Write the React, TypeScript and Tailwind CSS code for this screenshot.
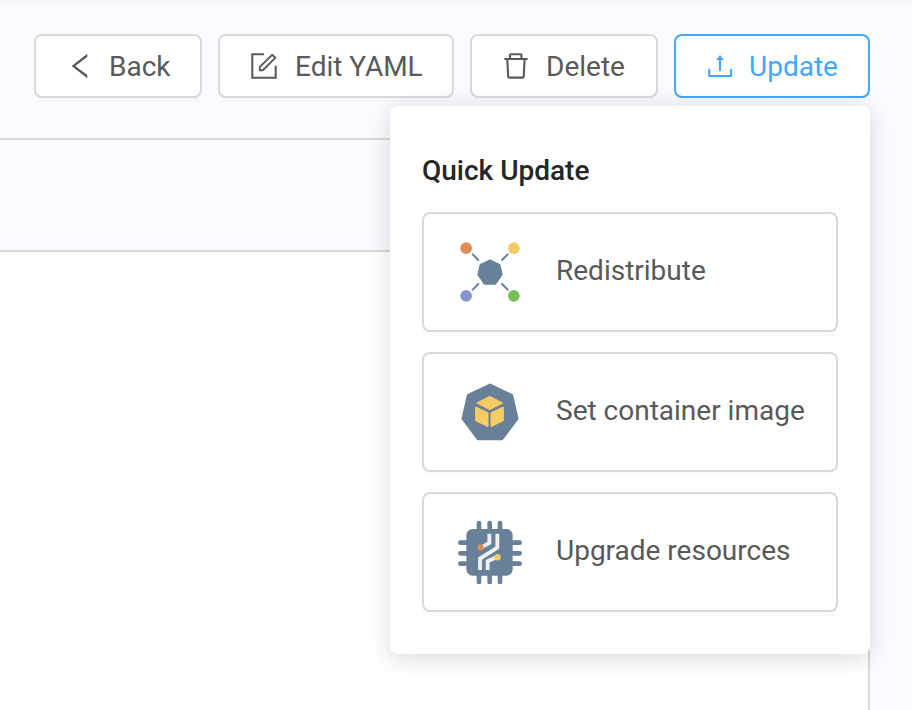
import type { ReactNode } from "react";

const BackIcon = () => (
  <svg className="size-7 shrink-0" viewBox="0 0 28 28" fill="currentColor">
    <path d="M21.3 1.8v3.1L9.2 14l12.1 9.1v3.1L5.6 14z" />
  </svg>
);

const EditIcon = () => (
  <svg className="size-7 shrink-0" viewBox="0 0 28 28" fill="none" stroke="currentColor" strokeWidth="2.1">
    <path d="M14 2.3H2.3v23.4h23.4V13.7" />
    <path d="M9.8 14.9 22.2 2.8l3.1 3L12.9 18.2H9.8z" strokeWidth="1.9" />
  </svg>
);

const TrashIcon = () => (
  <svg className="size-7 shrink-0" viewBox="0 0 28 28" fill="none" stroke="currentColor" strokeWidth="2.1" strokeLinejoin="round">
    <path d="M2.3 7h23.4M7.9 6.6V3.3q0-1 1-1h9.6q1 0 1 1v3.3" />
    <path d="m5.3 7.5.9 17.1q.1 1 1 1h13.5q.9 0 1-1l.9-17.1" />
  </svg>
);

const UploadIcon = () => (
  <svg className="size-7 shrink-0" viewBox="0 0 28 28" fill="none" stroke="currentColor" strokeWidth="2.1">
    <path d="M3.2 17v7h21.9v-7M14 7v12" />
    <path d="m14 3 4 5h-8z" fill="currentColor" stroke="none" />
  </svg>
);

const RedistributeIcon = () => (
  <svg className="size-16 shrink-0" viewBox="54 30 192 192">
    <path d="m98 73 17 17M203 73l-17 17M115 162l-17 17M186 162l17 17" stroke="#688199" strokeWidth="6" strokeLinecap="round" />
    <path d="m150 90 29 14 7 30-19 28h-34l-19-28 7-30z" fill="#688199" stroke="#688199" strokeWidth="4" strokeLinejoin="round" />
    <circle cx="78.500" cy="54.500" r="17.500" fill="#e28c53" />
    <circle cx="221.500" cy="54.500" r="17.500" fill="#f7cb63" />
    <circle cx="78.500" cy="197.500" r="17.500" fill="#8496cb" />
    <circle cx="221.500" cy="197.500" r="17.500" fill="#77bf53" />
  </svg>
);

const ContainerIcon = () => (
  <svg className="size-16 shrink-0" viewBox="54 30 192 192">
    <path d="m150 45 65 31 16 70-45 60h-72l-45-60 16-70z" fill="#688199" stroke="#688199" strokeWidth="9" strokeLinejoin="round" />
    <g fill="#f7cb63" stroke="#f7cb63" strokeWidth="3" strokeLinejoin="round">
      <path d="m149 79 39 20-39 20-39-20z" />
      <path d="m107 111 37 17v42l-37-18z" />
      <path d="m190 111-37 17v42l37-18z" />
    </g>
  </svg>
);

const ChipIcon = () => (
  <svg className="size-16 shrink-0" viewBox="54 30 192 192">
    <path
      d="M117 39v177M149 39v177M180 39v177M61 98h178M61 130h178M61 161h178"
      stroke="#688199"
      strokeWidth="14"
      strokeLinecap="round"
    />
    <rect x="79" y="57" width="139" height="140" rx="19" fill="#688199" />
    <g fill="none" stroke="#ecf0f1" strokeWidth="11.500">
      <path d="M148 71v28l-25 14M172 71v42l-52 33v34M143 180v-26l28-13" />
    </g>
    <circle cx="121.500" cy="112" r="9.500" fill="#e28c53" />
    <circle cx="172.500" cy="141.500" r="9.500" fill="#f7cb63" />
  </svg>
);

function ToolbarButton({ className, icon, children }: { className: string; icon: ReactNode; children: ReactNode }) {
  return (
    <button
      className={`flex h-16 shrink-0 items-center rounded-[8px] border-2 bg-white pl-[30px] text-[28px] leading-8 whitespace-nowrap shadow-[0_4px_0_rgba(0,0,0,0.016)] ${className}`}
    >
      {icon}
      {children}
    </button>
  );
}

function UpdateOption({ icon, label }: { icon: ReactNode; label: string }) {
  return (
    <button className="flex h-[120px] w-full items-center gap-[34px] rounded-[8px] border-2 border-[#d9d9d9] bg-white pl-[34px] text-[28px] leading-8 whitespace-nowrap text-[#595959] shadow-[0_4px_0_rgba(0,0,0,0.016)]">
      {icon}
      <span className="-mt-0.5">{label}</span>
    </button>
  );
}

export default function App() {
  return (
    <div className="h-[710px] w-[912px] overflow-hidden bg-[#fafbff] font-['Roboto',sans-serif] shadow-[inset_0_4px_4px_-2px_rgba(0,21,41,0.04)]">
      <header className="flex h-[138px] gap-4 pt-[34px] pl-[34px]">
        <ToolbarButton className="w-[168px] border-[#d9d9d9] text-[#595959]" icon={<BackIcon />}>
          <span className="mt-0.5 ml-[15px]">Back</span>
        </ToolbarButton>
        <ToolbarButton className="w-[236px] border-[#d9d9d9] text-[#595959]" icon={<EditIcon />}>
          <span className="mt-0.5 ml-[17px]">Edit YAML</span>
        </ToolbarButton>
        <ToolbarButton className="w-[188px] border-[#d9d9d9] text-[#595959]" icon={<TrashIcon />}>
          <span className="mt-0.5 ml-4">Delete</span>
        </ToolbarButton>
        <div className="relative">
          <ToolbarButton className="w-[196px] border-[#40a9ff] text-[#40a9ff]" icon={<UploadIcon />}>
            <span className="mt-0.5 ml-[15px]">Update</span>
          </ToolbarButton>
          <div className="absolute top-[72px] right-0 z-10 h-[548px] w-[480px] rounded-[8px] bg-white px-8 pt-[47px] shadow-[0_4px_24px_rgba(0,0,0,0.15)]">
            <h2 className="text-[28px] leading-9 font-medium text-[#262626]">Quick Update</h2>
            <div className="mt-[23px] flex flex-col gap-5">
              <UpdateOption icon={<RedistributeIcon />} label="Redistribute" />
              <UpdateOption icon={<ContainerIcon />} label="Set container image" />
              <UpdateOption icon={<ChipIcon />} label="Upgrade resources" />
            </div>
          </div>
        </div>
      </header>
      <main className="h-[572px] w-[870px] border-t-2 border-r-2 border-[#d9d9d9] bg-white">
        <div className="h-28 border-b-2 border-[#d9d9d9] bg-[#fafbff]" />
      </main>
    </div>
  );
}
